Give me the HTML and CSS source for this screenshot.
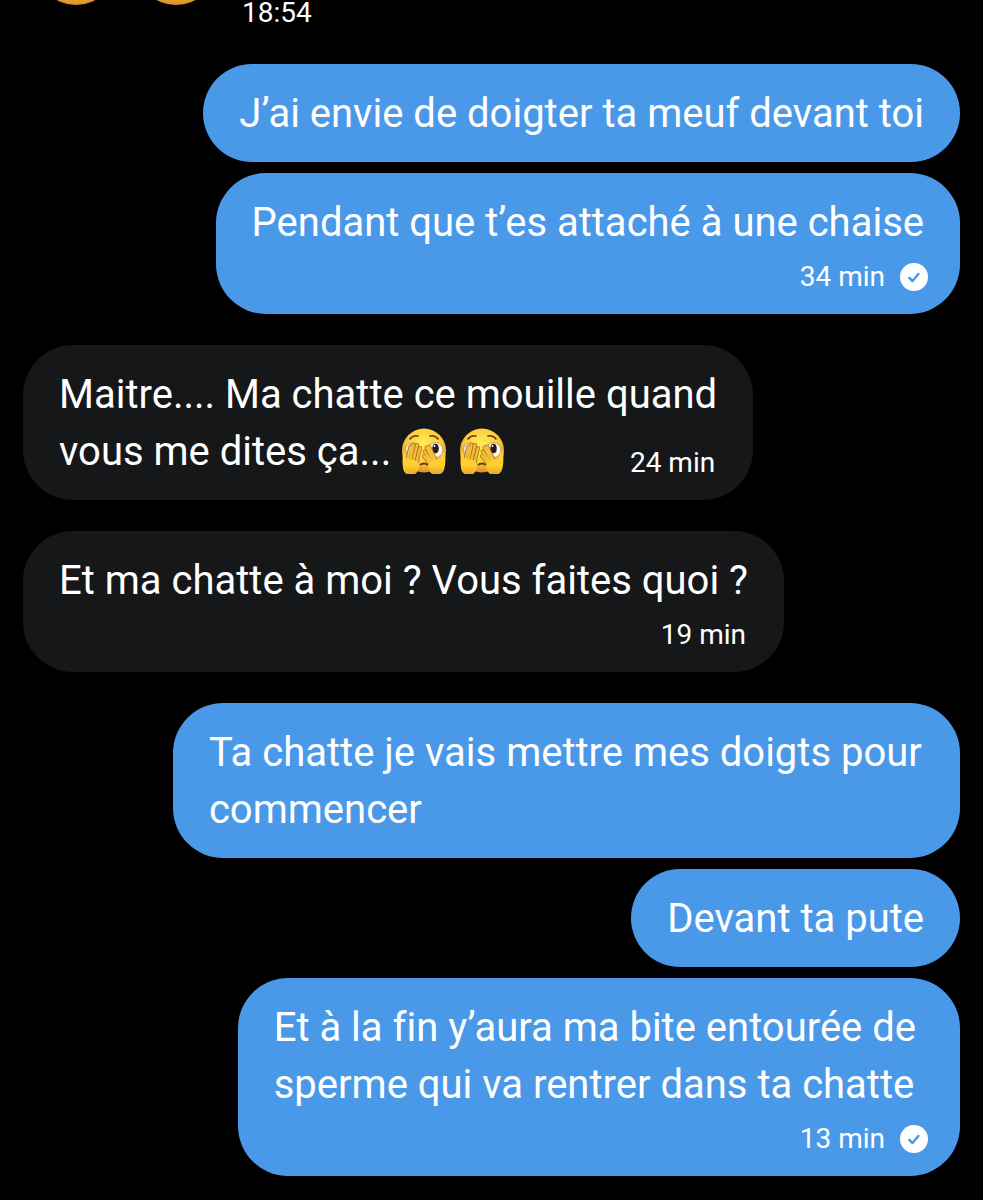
FILE: index.html
```html
<!DOCTYPE html>
<html lang="fr">
<head>
  <meta charset="UTF-8" />
  <meta name="viewport" content="width=device-width, initial-scale=1" />
  <title>Messages</title>
  <link rel="stylesheet" href="styles.css">
</head>
<body>
  <!-- Shared icons -->
  <svg class="defs" aria-hidden="true">
    <defs>
      <radialGradient id="face" cx="50%" cy="38%" r="62%">
        <stop offset="0" stop-color="#fff05a" />
        <stop offset="0.6" stop-color="#fbcf3c" />
        <stop offset="1" stop-color="#de8f2c" />
      </radialGradient>
      <linearGradient id="palm" x1="0" y1="0" x2="0" y2="1">
        <stop offset="0" stop-color="#fcd23a" />
        <stop offset="0.6" stop-color="#fdcf2e" />
        <stop offset="1" stop-color="#e9a32a" />
      </linearGradient>
    </defs>
    <symbol id="round" viewBox="0 0 46 46">
      <circle cx="23" cy="23" r="23" fill="url(#face)" />
    </symbol>
    <symbol id="peek" viewBox="0 0 46 46">
      <circle cx="23" cy="22.5" r="22" fill="url(#face)" />
      <path d="M9 11q3-4 8-3M29 8q5-1 8 3" fill="none" stroke="#6b3a10" stroke-width="1.6" stroke-linecap="round" />
      <ellipse cx="10.5" cy="21.500" rx="6" ry="6.500" fill="#f4eee0" stroke="#b98a4a" stroke-width="0.8" />
      <ellipse cx="34.5" cy="22" rx="7.500" ry="7.500" fill="#f8f6f1" stroke="#b98a4a" stroke-width="0.8" />
      <ellipse cx="34.5" cy="20.500" rx="3.200" ry="4.800" fill="#29180f" />
      <circle cx="33.5" cy="18" r="1" fill="#fff" />
      <path d="M19 37q4-3 8 0" fill="none" stroke="#6b3a10" stroke-width="1.8" />
      <!-- fingers, outline first -->
      <g fill="none" stroke-linecap="round">
        <path d="M6 33L9.500 18.500M9 33L12.500 16.500M12 34L16 17M15 36L19 20" stroke="#a8691b" stroke-width="4" />
        <path d="M6 33L9.500 18.500M9 33L12.500 16.500M12 34L16 17M15 36L19 20" stroke="#f2bd3c" stroke-width="2.600" />
        <path d="M36 35L28 18.500M34 35L25.500 19.500M32 36L23.500 23.500M31 38L23 28" stroke="#a8691b" stroke-width="4" />
        <path d="M36 35L28 18.500M34 35L25.500 19.500M32 36L23.500 23.500M31 38L23 28" stroke="#f4c03a" stroke-width="2.600" />
      </g>
      <path d="M2 24q3-1 3 6l11 3q3 3 1.500 8-1.500 6-7.500 6-7 0-8-7-1-7 0-16z" fill="url(#palm)" />
      <path d="M44 24q-3-1-4 6l-11 4q-3 2-1.500 7 2 6 7.500 6 7 0 8.500-7 1.500-7 .5-16z" fill="url(#palm)" />
    </symbol>
    <symbol id="check" viewBox="0 0 28 28">
      <circle cx="14" cy="14" r="14" fill="#fff" />
      <path d="M9.300 14.800l3.200 3.200 5.900-7" fill="none" stroke="#4a99e9" stroke-width="2.500" stroke-linecap="round" stroke-linejoin="round" />
    </symbol>
  </svg>

  <main class="chat">
    <div class="emoji-row">
      <svg class="emoji-big" aria-hidden="true"><use href="#round" /></svg>
      <svg class="emoji-big" aria-hidden="true"><use href="#round" /></svg>
      <time class="time">18:54</time>
    </div>

    <div class="group sent">
      <div class="bubble">
        <p class="text">J’ai envie de doigter ta meuf devant toi</p>
      </div>
      <div class="bubble">
        <p class="text">Pendant que t’es attaché à une chaise</p>
        <div class="meta"><time>34 min</time><svg class="check" role="img" aria-label="Vu"><use href="#check" /></svg></div>
      </div>
    </div>

    <div class="group received">
      <div class="bubble inline">
        <p class="text">Maitre.... Ma chatte ce mouille quand<br>vous me dites ça... <svg class="emoji" role="img" aria-label="🫣"><use href="#peek" /></svg> <svg class="emoji" role="img" aria-label="🫣"><use href="#peek" /></svg></p>
        <div class="meta"><time>24 min</time></div>
      </div>
    </div>

    <div class="group received">
      <div class="bubble">
        <p class="text">Et ma chatte à moi ? Vous faites quoi ?</p>
        <div class="meta"><time>19 min</time></div>
      </div>
    </div>

    <div class="group sent">
      <div class="bubble">
        <p class="text">Ta chatte je vais mettre mes doigts pour commencer</p>
      </div>
      <div class="bubble">
        <p class="text">Devant ta pute</p>
      </div>
      <div class="bubble">
        <p class="text wrapped">Et à la fin y’aura ma bite entourée de<br>sperme qui va rentrer dans ta chatte</p>
        <div class="meta"><time>13 min</time><svg class="check" role="img" aria-label="Vu"><use href="#check" /></svg></div>
      </div>
    </div>
  </main>
</body>
</html>
```

FILE: styles.css
```css
body {
  margin: 0;
  background: #000;
  color: #fff;
  font-family: Roboto, "Liberation Sans", sans-serif;
}

.defs {
  position: absolute;
  width: 0;
  height: 0;
}

.chat {
  display: flex;
  flex-direction: column;
  gap: 31px;
  padding: 0 23px 23px;
  overflow: hidden;
}

/* scrolled partly out of view */
.emoji-row {
  display: flex;
  align-items: flex-start;
  gap: 20px;
  margin-top: -75px;
  padding: 0 13px 5px;
}

.emoji-big {
  width: 80px;
  height: 80px;
}

.time {
  margin-left: 6px;
  padding: 76px 0 3px;
  font-size: 28px;
  line-height: 24px;
}

.group {
  display: flex;
  flex-direction: column;
  align-items: flex-start;
  gap: 11px;
}

.sent {
  align-items: flex-end;
}

.bubble {
  box-sizing: border-box;
  max-width: 84%;
  padding: 21px 36px 20px;
  border-radius: 50px;
  background: #151719;
}

.sent .bubble {
  background: #4a99e9;
}

.text {
  margin: 0;
  font-size: 40px;
  line-height: 57px;
  font-variant-ligatures: no-common-ligatures;
}

.wrapped {
  padding-right: 8px;
}

.emoji {
  width: 46px;
  height: 46px;
  margin-right: 2px;
  vertical-align: -9px;
}

.meta {
  display: flex;
  justify-content: flex-end;
  align-items: center;
  gap: 15px;
  margin-top: 10px;
  padding: 0 2px 1px 0;
  font-size: 28px;
  line-height: 32px;
}

.sent .meta {
  margin-right: -6px;
}

/* time shares the last line of text */
.inline .meta {
  margin-top: -33px;
}

.check {
  width: 28px;
  height: 28px;
}
```
